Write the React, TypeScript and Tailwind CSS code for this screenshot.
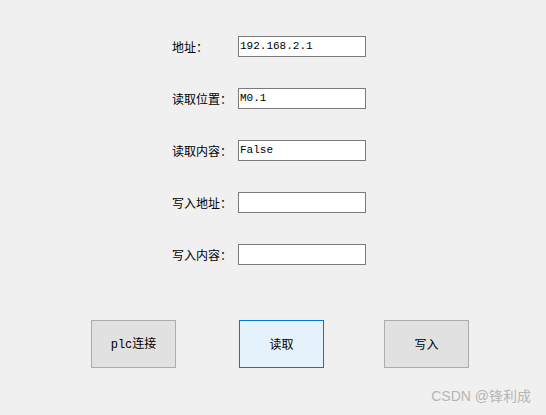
import React from 'react';

const rows = [
  { label: '地址：', value: '192.168.2.1' },
  { label: '读取位置：', value: 'M0.1' },
  { label: '读取内容：', value: 'False' },
  { label: '写入地址：', value: '' },
  { label: '写入内容：', value: '' },
];

const cjk = { fontFamily: '"Noto Sans CJK SC", "Liberation Sans", sans-serif' };

export default function App() {
  return (
    <div className="relative w-[546px] h-[415px] bg-[#f0f0f0] overflow-hidden" style={cjk}>
      <div className="flex flex-col gap-[31px] pt-[36px] pl-[172px]">
        {rows.map((row) => (
          <div key={row.label} className="flex items-center h-[21px]">
            <span className="w-[66px] text-[12px] leading-none text-black">{row.label}</span>
            <div className="w-[128px] h-[21px] border border-[#7a7a7a] bg-white flex items-center pl-[1px]">
              <span
                className="text-[11px] leading-none text-black"
                style={{ fontFamily: '"Liberation Mono", monospace' }}
              >
                {row.value}
              </span>
            </div>
          </div>
        ))}
      </div>

      <div className="flex mt-[55px] pl-[91px]">
        <button
          type="button"
          className="w-[85px] h-[48px] border border-[#adadad] bg-[#e1e1e1] text-[12px] text-black"
        >
          <span style={{ fontFamily: '"Liberation Mono", monospace' }}>plc</span>连接
        </button>
        <button
          type="button"
          className="ml-[63px] w-[85px] h-[48px] border border-[#0078d7] bg-[#e5f1fb] text-[12px] text-black"
        >
          读取
        </button>
        <button
          type="button"
          className="ml-[60px] w-[85px] h-[48px] border border-[#adadad] bg-[#e1e1e1] text-[12px] text-black"
        >
          写入
        </button>
      </div>

      <span
        className="absolute right-[15px] bottom-[8px] text-[14px] text-[#b5b5b5]"
        style={{ fontFamily: '"Liberation Sans", "Noto Sans CJK SC", sans-serif' }}
      >
        CSDN @锋利成
      </span>
    </div>
  );
}
